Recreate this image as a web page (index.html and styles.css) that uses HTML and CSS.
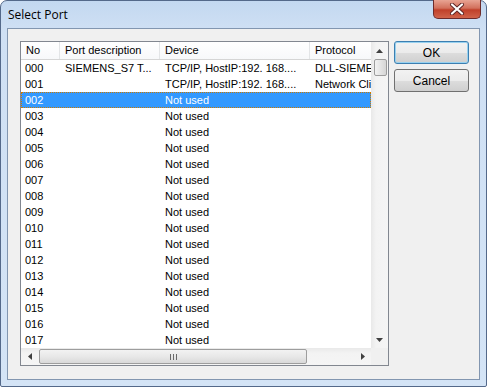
FILE: index.html
```html
<!DOCTYPE html>
<html>
<head>
<meta charset="utf-8">
<link rel="stylesheet" href="styles.css">
</head>
<body>
<div class="window">
  <div class="titlebar">
    <span class="title">Select Port</span>
    <div class="close">
      <svg width="18" height="12" viewBox="0 0 18 12"><path d="M4 1.5 L14 10.5 M14 1.5 L4 10.5" stroke="#5a2323" stroke-width="4" stroke-linecap="round"/><path d="M4 1.5 L14 10.5 M14 1.5 L4 10.5" stroke="#fff" stroke-width="2.2" stroke-linecap="round"/></svg>
    </div>
  </div>
  <div class="client">
    <div class="list">
      <div class="view">
        <div class="header">
          <div class="hc c-no">No</div>
          <div class="hc c-desc">Port description</div>
          <div class="hc c-dev">Device</div>
          <div class="hc c-proto">Protocol</div>
        </div>
        <div class="rows">
          <div class="row"><span class="c-no">000</span><span class="c-desc">SIEMENS_S7 T...</span><span class="c-dev">TCP/IP, HostIP:192. 168....</span><span class="c-proto">DLL-SIEMENS</span></div>
          <div class="row"><span class="c-no">001</span><span class="c-desc"></span><span class="c-dev">TCP/IP, HostIP:192. 168....</span><span class="c-proto">Network Client</span></div>
          <div class="row sel"><span class="c-no">002</span><span class="c-desc"></span><span class="c-dev">Not used</span><span class="c-proto"></span></div>
          <div class="row"><span class="c-no">003</span><span class="c-desc"></span><span class="c-dev">Not used</span></div>
          <div class="row"><span class="c-no">004</span><span class="c-desc"></span><span class="c-dev">Not used</span></div>
          <div class="row"><span class="c-no">005</span><span class="c-desc"></span><span class="c-dev">Not used</span></div>
          <div class="row"><span class="c-no">006</span><span class="c-desc"></span><span class="c-dev">Not used</span></div>
          <div class="row"><span class="c-no">007</span><span class="c-desc"></span><span class="c-dev">Not used</span></div>
          <div class="row"><span class="c-no">008</span><span class="c-desc"></span><span class="c-dev">Not used</span></div>
          <div class="row"><span class="c-no">009</span><span class="c-desc"></span><span class="c-dev">Not used</span></div>
          <div class="row"><span class="c-no">010</span><span class="c-desc"></span><span class="c-dev">Not used</span></div>
          <div class="row"><span class="c-no">011</span><span class="c-desc"></span><span class="c-dev">Not used</span></div>
          <div class="row"><span class="c-no">012</span><span class="c-desc"></span><span class="c-dev">Not used</span></div>
          <div class="row"><span class="c-no">013</span><span class="c-desc"></span><span class="c-dev">Not used</span></div>
          <div class="row"><span class="c-no">014</span><span class="c-desc"></span><span class="c-dev">Not used</span></div>
          <div class="row"><span class="c-no">015</span><span class="c-desc"></span><span class="c-dev">Not used</span></div>
          <div class="row"><span class="c-no">016</span><span class="c-desc"></span><span class="c-dev">Not used</span></div>
          <div class="row"><span class="c-no">017</span><span class="c-desc"></span><span class="c-dev">Not used</span></div>
        </div>
      </div>
      <div class="vscroll">
        <div class="arrow"><svg width="7" height="4" viewBox="0 0 7 4"><path d="M0 4 L3.5 0 L7 4 Z" fill="#404040"/></svg></div>
        <div class="vthumb"></div>
        <div class="vtrack"></div>
        <div class="arrow"><svg width="7" height="4" viewBox="0 0 7 4"><path d="M0 0 L3.5 4 L7 0 Z" fill="#404040"/></svg></div>
      </div>
      <div class="hscroll">
        <div class="harrow"><svg width="4" height="7" viewBox="0 0 4 7"><path d="M4 0 L0 3.5 L4 7 Z" fill="#404040"/></svg></div>
        <div class="hthumb"><svg width="7" height="6" viewBox="0 0 7 6"><path d="M0.5 0 V6 M3.5 0 V6 M6.5 0 V6" stroke="#6a6a6a" stroke-width="1"/></svg></div>
        <div class="htrack"></div>
        <div class="harrow"><svg width="4" height="7" viewBox="0 0 4 7"><path d="M0 0 L4 3.5 L0 7 Z" fill="#404040"/></svg></div>
      </div>
      <div class="corner"></div>
    </div>
    <div class="buttons">
      <div class="btn def">OK</div>
      <div class="btn">Cancel</div>
    </div>
  </div>
</div>
</body>
</html>
```

FILE: styles.css
```css
* { box-sizing: border-box; }
html, body { margin: 0; padding: 0; background: #ffffff; }
body {
  font-family: "Liberation Sans", Arial, sans-serif;
  font-size: 11px;
  color: #000;
}
.window {
  width: 487px;
  height: 387px;
  background: linear-gradient(#c3d8f0 0px, #cfe0f4 30px, #d4e4f6 100%);
  border: 1px solid #54698a;
  border-radius: 7px 7px 2px 2px;
  display: flex;
  flex-direction: column;
}
.titlebar {
  height: 27px;
  display: flex;
  justify-content: space-between;
  align-items: flex-start;
  padding: 0 5px 0 7px;
}
.title {
  font-family: "Open Sans", "Liberation Sans", sans-serif;
  font-size: 12px;
  margin-top: 5px;
  color: #000;
}
.close {
  width: 48px;
  height: 19px;
  margin-top: -1px;
  border: 1px solid #6d2b2b;
  border-top: none;
  border-radius: 0 0 5px 5px;
  background: linear-gradient(#e8a493 0%, #d2705c 45%, #c0402a 55%, #d0634a 100%);
  display: flex;
  align-items: center;
  justify-content: center;
}
.client {
  margin: 0 6px 6px 6px;
  flex: 1;
  background: #f0f0f0;
  border: 1px solid #8296b0;
  display: flex;
  align-items: flex-start;
  padding: 12px 0 0 12px;
}
.list {
  width: 369px;
  height: 325px;
  border: 1px solid #828790;
  background: #fff;
  display: grid;
  grid-template-columns: 350px 17px;
  grid-template-rows: 306px 17px;
}
.view { overflow: hidden; }
.header {
  height: 18px;
  display: flex;
  background: linear-gradient(#ffffff, #f7f8fa);
  border-bottom: 1px solid #d5d5d5;
}
.hc {
  height: 17px;
  line-height: 17px;
  padding-left: 5px;
  border-right: 1px solid #e3e5e7;
  white-space: nowrap;
  overflow: hidden;
}
.c-no { width: 39px; flex: none; }
.c-desc { width: 100px; flex: none; }
.c-dev { width: 150px; flex: none; }
.c-proto { width: 61px; flex: none; }
.hc.c-proto { border-right: none; }
.row {
  height: 16px;
  line-height: 16px;
  display: flex;
  white-space: nowrap;
}
.row span {
  padding-left: 5px;
  overflow: hidden;
  white-space: nowrap;
}
.row .c-no { padding-left: 4px; }
.row.sel {
  background: #3399ff;
  color: #fff;
  outline: 1px dotted #cc7a00;
  outline-offset: -1px;
}
.vscroll {
  background: linear-gradient(90deg, #e9e9e9, #f3f3f3 30%, #f5f5f5);
  display: flex;
  flex-direction: column;
}
.arrow {
  height: 17px;
  flex: none;
  display: flex;
  align-items: center;
  justify-content: center;
}
.vthumb {
  height: 17px;
  margin: 0 1px 0 3px;
  border: 1px solid #9d9d9d;
  border-radius: 2px;
  background: linear-gradient(90deg, #f2f2f2, #e4e4e4 50%, #d6d6d6);
  flex: none;
}
.vtrack { flex: 1; }
.hscroll {
  background: linear-gradient(#e9e9e9, #f3f3f3 30%, #f5f5f5);
  display: flex;
}
.harrow {
  width: 17px;
  flex: none;
  display: flex;
  align-items: center;
  justify-content: center;
}
.hthumb {
  width: 268px;
  margin: 1px 0 1px 1px;
  border: 1px solid #9d9d9d;
  border-radius: 2px;
  background: linear-gradient(#f2f2f2, #e8e8e8 50%, #d9d9d9);
  display: flex;
  align-items: center;
  justify-content: center;
  flex: none;
}
.htrack { flex: 1; }
.corner { background: #f0f0f0; }
.buttons {
  margin-left: 5px;
  display: flex;
  flex-direction: column;
  gap: 5px;
}
.btn {
  width: 75px;
  height: 23px;
  border: 1px solid #707070;
  border-radius: 3px;
  background: linear-gradient(#f2f2f2 0%, #ebebeb 50%, #dddddd 51%, #cfcfcf 100%);
  display: flex;
  align-items: center;
  justify-content: center;
  font-size: 12px;
}
.btn.def {
  border-color: #3c7fb1;
  box-shadow: inset 0 0 0 1px #98d1ef;
}
```
